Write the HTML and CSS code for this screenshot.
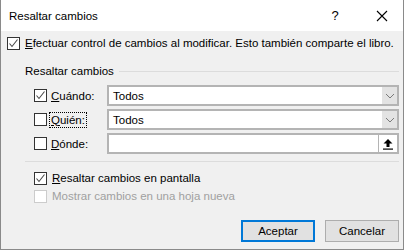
FILE: index.html
```html
<!DOCTYPE html>
<html lang="es">
<head>
    <meta charset="UTF-8">
    <title>Resaltar cambios</title>
    <link rel="stylesheet" href="styles.css">
</head>
<body>
    <div class="dialog">
        <div class="titlebar">
            <span class="title">Resaltar cambios</span>
            <span class="help">?</span>
            <span class="close">
                <svg width="12" height="12" viewBox="0 0 12 12"><path d="M1 1 L11 11 M11 1 L1 11" stroke="#000" stroke-width="1.1" fill="none"/></svg>
            </span>
        </div>
        <div class="content">
            <label class="check-row">
                <span class="box checked"><svg width="11" height="11" viewBox="0 0 11 11"><path d="M1.5 5.5 L4 8.5 L9.5 1.5" stroke="#4a4a4a" stroke-width="1.1" fill="none"/></svg></span>
                <span><u>E</u>fectuar control de cambios al modificar. Esto también comparte el libro.</span>
            </label>

            <div class="group">
                <div class="legend"><span>Resaltar cambios</span><span class="rule"></span></div>

                <div class="field-row">
                    <span class="box checked"><svg width="11" height="11" viewBox="0 0 11 11"><path d="M1.5 5.5 L4 8.5 L9.5 1.5" stroke="#4a4a4a" stroke-width="1.1" fill="none"/></svg></span>
                    <span class="field-label"><u>C</u>uándo:</span>
                    <div class="combo">
                        <span class="combo-text">Todos</span>
                        <span class="combo-btn"><svg width="10" height="6" viewBox="0 0 10 6"><path d="M1 1 L5 5 L9 1" stroke="#7a7a7a" stroke-width="1" fill="none"/></svg></span>
                    </div>
                </div>

                <div class="field-row">
                    <span class="box"></span>
                    <span class="field-label"><span class="focus"><u>Q</u>uién:</span></span>
                    <div class="combo">
                        <span class="combo-text">Todos</span>
                        <span class="combo-btn"><svg width="10" height="6" viewBox="0 0 10 6"><path d="M1 1 L5 5 L9 1" stroke="#7a7a7a" stroke-width="1" fill="none"/></svg></span>
                    </div>
                </div>

                <div class="field-row">
                    <span class="box"></span>
                    <span class="field-label"><u>D</u>ónde:</span>
                    <div class="combo">
                        <span class="combo-text"></span>
                        <span class="ref-btn"><svg width="12" height="12" viewBox="0 0 12 12"><path d="M6 1 L10.5 5.5 L7.5 5.5 L7.5 9 L4.5 9 L4.5 5.5 L1.5 5.5 Z" fill="#000"/><rect x="1" y="10.5" width="10" height="1.2" fill="#000"/></svg></span>
                    </div>
                </div>
            </div>

            <div class="separator"></div>

            <div class="options">
                <label class="check-row">
                    <span class="box checked"><svg width="11" height="11" viewBox="0 0 11 11"><path d="M1.5 5.5 L4 8.5 L9.5 1.5" stroke="#4a4a4a" stroke-width="1.1" fill="none"/></svg></span>
                    <span><u>R</u>esaltar cambios en pantalla</span>
                </label>
                <label class="check-row disabled">
                    <span class="box"></span>
                    <span>Mostrar cambios en una hoja nueva</span>
                </label>
            </div>

            <div class="buttons">
                <button class="btn default">Aceptar</button>
                <button class="btn">Cancelar</button>
            </div>
        </div>
    </div>
</body>
</html>
```

FILE: styles.css
```css
body { margin: 0; background: #fff; font-family: "Liberation Sans", Arial, sans-serif; font-size: 11.5px; color: #000; }
.dialog { width: 404px; height: 250px; box-sizing: border-box; border: 1px solid #8a8a8a; border-top: none; display: flex; flex-direction: column; }
.titlebar { height: 31px; background: #fff; display: flex; align-items: center; padding-left: 8px; flex-shrink: 0; }
.title { flex: 1; }
.help { width: 12px; text-align: center; font-size: 13px; margin-right: 35px; }
.close { width: 12px; height: 12px; margin-right: 15px; display: flex; }
.content { flex: 1; background: #f0f0f0; padding: 5px 4px 0 6px; }

.check-row { display: flex; align-items: center; gap: 5px; height: 14px; line-height: 14px; white-space: nowrap; }
.box { width: 13px; height: 13px; box-sizing: border-box; border: 1px solid #333; background: #fff; display: flex; align-items: center; justify-content: center; flex-shrink: 0; }
.disabled { color: #a0a0a0; }
.disabled .box { border-color: #cccccc; }

.group { margin-left: 18px; margin-top: 14px; }
.legend { display: flex; align-items: center; height: 14px; line-height: 14px; }
.legend .rule { flex: 1; height: 1px; background: #dcdcdc; margin-left: 5px; }

.field-row { display: flex; align-items: center; height: 21px; margin-top: 3px; padding-left: 9px; }
.legend + .field-row { margin-top: 7px; }
.field-row .box { margin-right: 4px; }
.field-label { width: 56px; white-space: nowrap; }
.focus { outline: 1px dotted #000; outline-offset: 1px; }
.combo { flex: 1; height: 21px; box-sizing: border-box; border: 2px solid #b4b4b4; background: #fff; display: flex; align-items: center; }
.combo-text { flex: 1; padding-left: 4px; }
.combo-btn { width: 15px; height: 17px; background: #e3e3e3; display: flex; align-items: center; justify-content: center; }
.ref-btn { width: 18px; height: 17px; background: #fff; border-left: 1px solid #b4b4b4; display: flex; align-items: center; justify-content: center; }

.separator { height: 1px; background: #dcdcdc; margin: 7px 0 0 18px; }
.options { margin-left: 27px; margin-top: 9px; display: flex; flex-direction: column; gap: 4px; }

.buttons { display: flex; justify-content: flex-end; gap: 10px; margin-top: 17px; }
.btn { width: 74px; height: 22px; box-sizing: border-box; border: 1px solid #adadad; background: #e1e1e1; font-family: inherit; font-size: 11.5px; padding: 0; color: #000; }
.btn.default { border: 2px solid #0078d7; }
```
